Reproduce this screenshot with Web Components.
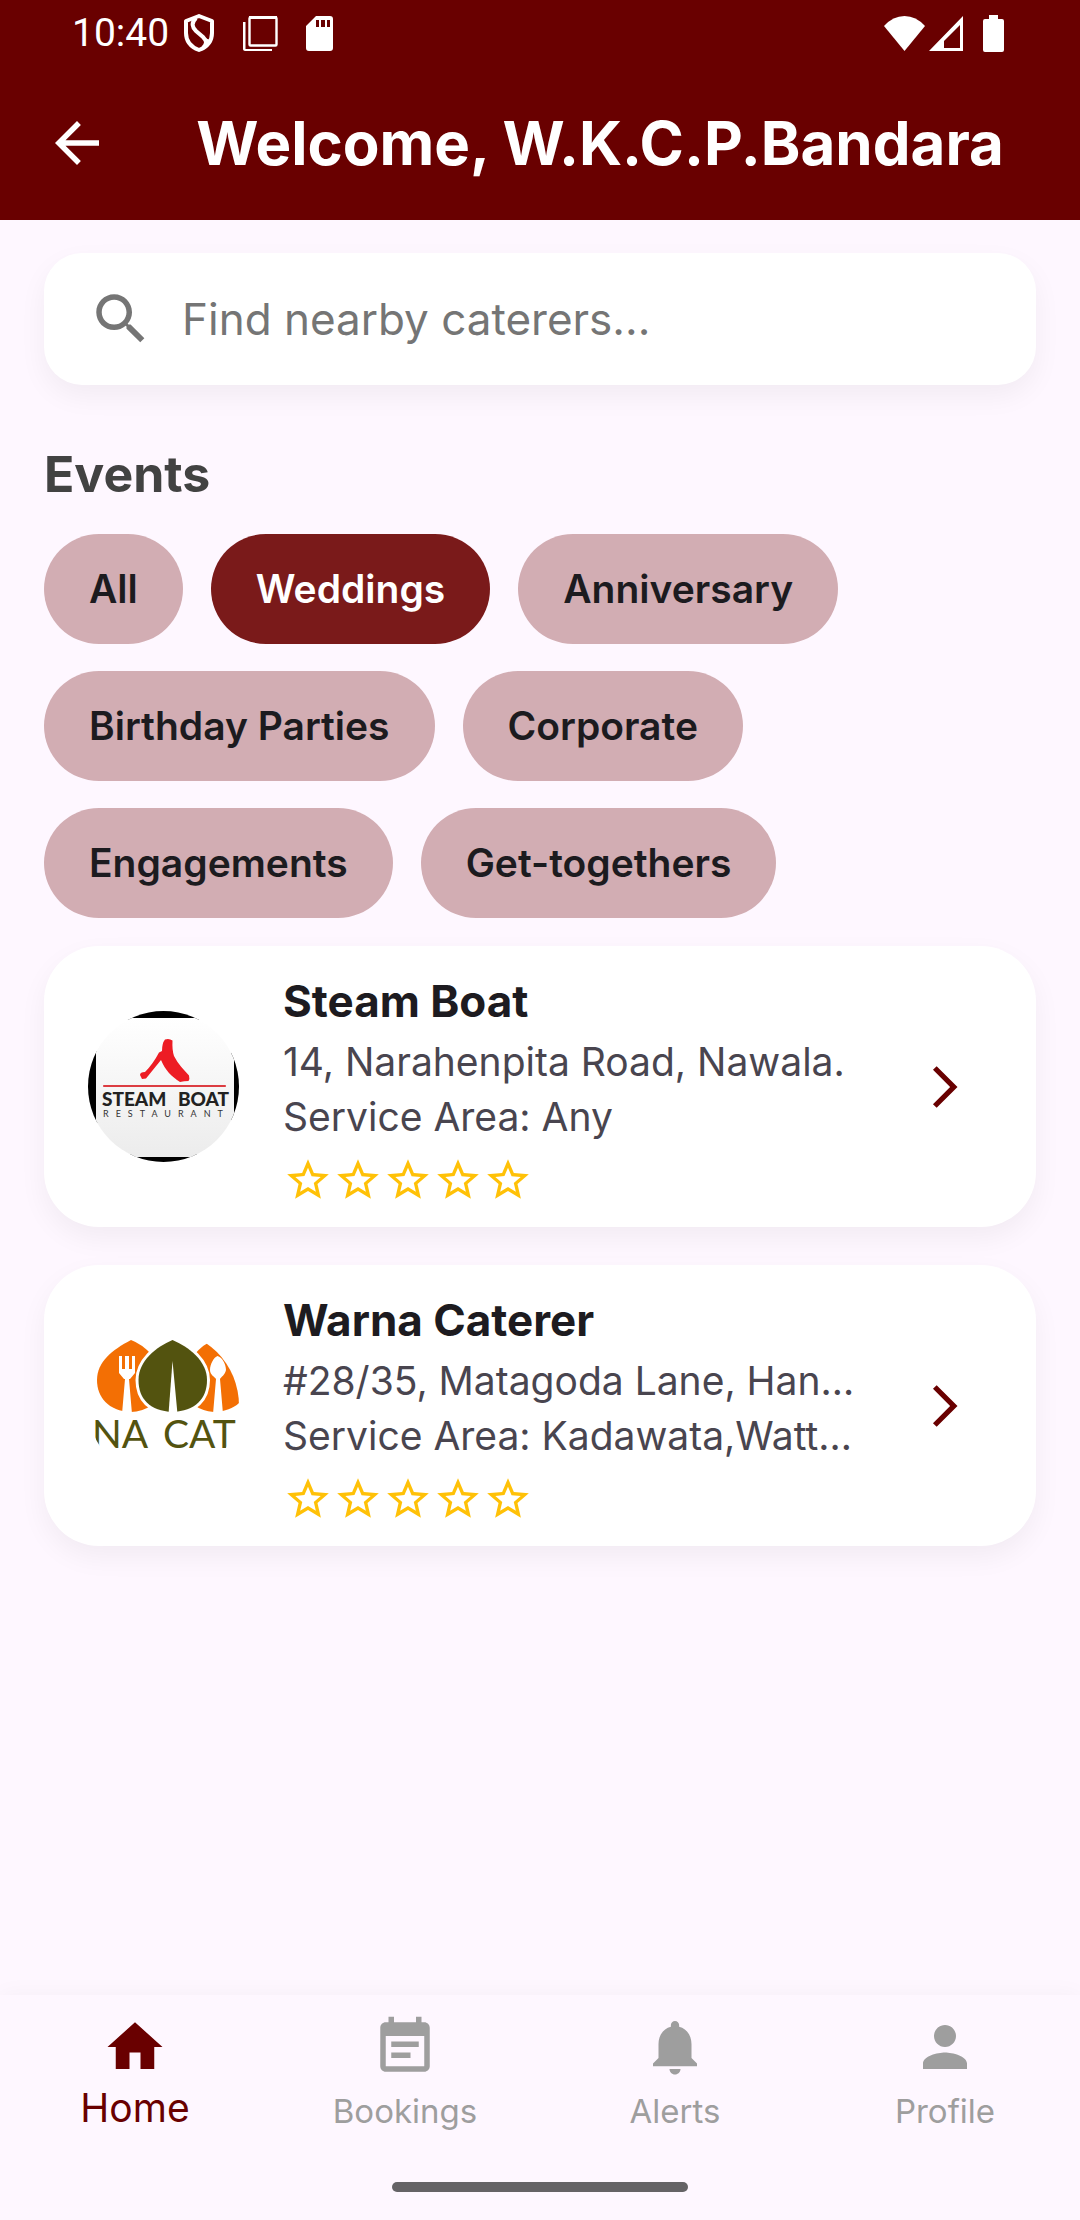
<!DOCTYPE html>
<html lang="en">
<head>
<meta charset="utf-8">
<meta name="viewport" content="width=device-width, initial-scale=1">
<title>Caterers</title>
<style>
  :root {
    --primary: #690000;
    --surface: #fef7ff;
    --card: #ffffff;
    --chip: #d2adb3;
    --chip-on: #7a1a1a;
    --ink: #1d1b20;
    --ink-soft: #49454f;
    --muted: #9e9e9e;
    --star: #ffc107;
    --gutter: 44px;
    --shadow: 0 11px 28px rgba(0, 0, 0, .05);
  }
  body { margin: 0; background: var(--surface); color: var(--ink); font-family: Inter, "Noto Sans", sans-serif; }
</style>
</head>
<body>
<caterer-app></caterer-app>

<script>
const ICONS = {
  back: 'M20 11H7.83l5.59-5.59L12 4l-8 8 8 8 1.41-1.41L7.83 13H20v-2z',
  search: 'M15.5 14h-.79l-.28-.27C15.41 12.59 16 11.11 16 9.5 16 5.91 13.09 3 9.5 3S3 5.91 3 9.5 5.91 16 9.5 16c1.61 0 3.09-.59 4.23-1.57l.27.28v.79l5 4.99L20.49 19l-4.99-5zm-6 0C7.01 14 5 11.99 5 9.5S7.01 5 9.5 5 14 7.01 14 9.5 11.99 14 9.5 14z',
  star: 'M22 9.24l-7.19-.62L12 2 9.19 8.63 2 9.24l5.46 4.73L5.82 21 12 17.27 18.18 21l-1.63-7.03L22 9.24zM12 15.4l-3.76 2.27 1-4.28-3.32-2.88 4.38-.38L12 6.1l1.71 4.04 4.38.38-3.32 2.88 1 4.28L12 15.4z',
  forward: 'M6.23 20.23L8 22l10-10L8 2 6.23 3.77 14.46 12z',
  home: 'M10 20v-6h4v6h5v-8h3L12 3 2 12h3v8z',
  bookings: 'M17 10H7v2h10v-2zm2-7h-1V1h-2v2H8V1H6v2H5c-1.11 0-1.99.9-1.99 2L3 19c0 1.1.89 2 2 2h14c1.1 0 2-.9 2-2V5c0-1.1-.9-2-2-2zm0 16H5V8h14v11zm-5-5H7v2h7v-2z',
  alerts: 'M12 22c1.1 0 2-.9 2-2h-4c0 1.1.89 2 2 2zm6-6v-5c0-3.07-1.64-5.64-4.5-6.32V4c0-.83-.67-1.5-1.5-1.5s-1.5.67-1.5 1.5v.68C7.63 5.36 6 7.92 6 11v5l-2 2v1h16v-1l-2-2z',
  profile: 'M12 12c2.21 0 4-1.79 4-4s-1.79-4-4-4-4 1.79-4 4 1.79 4 4 4zm0 2c-2.67 0-8 1.34-8 4v2h16v-2c0-2.66-5.33-4-8-4z'
};

function define(name, render) {
  customElements.define(name, class extends HTMLElement {
    connectedCallback() {
      if (this.shadowRoot) return;
      this.attachShadow({ mode: 'open' }).innerHTML = render(this);
    }
  });
}

define('ui-icon', el => `
  <style>
    :host { display: block; flex: none; width: var(--icon-size, 66px); height: var(--icon-size, 66px); }
    svg { display: block; width: 100%; height: 100%; fill: currentColor; }
  </style>
  <svg viewBox="0 0 24 24" aria-hidden="true"><path d="${ICONS[el.getAttribute('name')]}"/></svg>`);

define('status-bar', () => `
  <style>
    :host { display: flex; justify-content: space-between; align-items: center; height: 66px;
            padding: 0 76px 0 72px; color: #fff; font: 39px/66px Roboto, sans-serif; }
    div { display: flex; align-items: center; }
    svg { display: block; fill: currentColor; }
    .left { gap: 28px; }
    .clock { display: flex; align-items: center; gap: 14px; }
    .right { gap: 4px; }
    .battery { margin-left: 16px; }
  </style>
  <div class="left">
    <span class="clock"><time>10:40</time>
      <svg width="32" height="38" viewBox="0 0 32 38" aria-hidden="true">
        <path fill="none" stroke="#fff" stroke-width="4" stroke-linejoin="round" d="M16 2 29 7v12c0 8-5 14-13 17C8 33 3 27 3 19V7z"/>
        <path fill="none" stroke="#fff" stroke-width="4" d="M13 4C8 9 9 13 13 17l7 6c4 4 4 7 0 11"/>
        <path d="M22 24c2 4 1 7-2 10l7-8z"/>
      </svg></span>
    <svg width="35" height="35" viewBox="0 0 35 35" aria-hidden="true">
      <rect x="6.500" y="1.500" width="27" height="28" rx="1" fill="none" stroke="#fff" stroke-width="2.400"/>
      <path d="M0 6h2.500v27h26.500v2H2c-1 0-2-1-2-2zM6 0h28v3H6z"/>
    </svg>
    <svg width="27" height="35" viewBox="0 0 27 35" aria-hidden="true">
      <path fill-rule="evenodd" d="M10 0h14q3 0 3 3v29q0 3-3 3H3q-3 0-3-3V10zm0 4v7h3V4zm5 0v7h4V4zm6 0v7h3V4z"/>
    </svg>
  </div>
  <div class="right">
    <svg width="41" height="35" viewBox="0 0 41 35" aria-hidden="true"><path d="M0 10Q9 0 20.500 0T41 10L20.500 35z"/></svg>
    <svg width="34" height="35" viewBox="0 0 34 35" aria-hidden="true"><path fill-rule="evenodd" d="M34 0v35H0zM31 9 15 25v7h16z"/></svg>
    <svg class="battery" width="21" height="37" viewBox="0 0 21 37" aria-hidden="true"><path d="M6 0h9v4h4q2 0 2 2v29q0 2-2 2H2q-2 0-2-2V6q0-2 2-2h4z"/></svg>
  </div>`);

define('app-header', () => `
  <style>
    :host { display: block; background: var(--primary); color: #fff; }
    header { display: flex; align-items: center; gap: 54px; height: 154px; padding: 0 44px; }
    button { display: block; padding: 0; border: 0; background: none; color: inherit; }
    h1 { flex: 1; margin: 0; text-align: center; font-size: 60px; line-height: 74px; font-weight: 700; white-space: nowrap; }
  </style>
  <status-bar></status-bar>
  <header>
    <button type="button" aria-label="Back"><ui-icon name="back"></ui-icon></button>
    <h1><slot></slot></h1>
  </header>`);

define('search-field', el => `
  <style>
    :host { display: block; }
    label { display: flex; align-items: center; gap: 28px; height: 132px; padding: 0 44px; box-sizing: border-box;
            border-radius: 38px; background: var(--card); box-shadow: var(--shadow); color: #757575; }
    input { flex: 1; min-width: 0; height: 66px; padding: 0; border: 0; outline: 0; background: none;
            font: 400 44px/66px Inter, sans-serif; color: var(--ink); }
    input::placeholder { color: #757575; opacity: 1; }
  </style>
  <label><ui-icon name="search"></ui-icon>
    <input type="text" aria-label="Search caterers" placeholder="${el.getAttribute('placeholder')}"></label>`);

define('event-chip', el => `
  <style>
    :host { display: block; }
    button { display: block; height: 110px; padding: 0 45px; border: 0; border-radius: 55px; background: var(--chip);
             color: #1c1b1f; font: 600 39px/110px Inter, sans-serif; white-space: nowrap; }
    button[aria-pressed="true"] { background: var(--chip-on); color: #fff; }
  </style>
  <button type="button" aria-pressed="${el.hasAttribute('selected')}"><slot></slot></button>`);

define('chip-group', () => `
  <style>
    :host { display: block; }
    h2 { margin: 0 0 23px; color: #424242; font-size: 50px; line-height: 74px; font-weight: 700; }
    div { display: flex; flex-wrap: wrap; gap: 27px 28px; }
  </style>
  <h2><slot name="title"></slot></h2>
  <div><slot></slot></div>`);

define('star-rating', () => `
  <style>
    :host { display: flex; height: 50px; --icon-size: 50px; color: var(--star); }
  </style>
  ${'<ui-icon name="star"></ui-icon>'.repeat(5)}`);

define('caterer-card', () => `
  <style>
    :host { display: block; }
    a { display: flex; align-items: center; padding: 22px 66px 22px 44px; border-radius: 55px; background: var(--card);
        box-shadow: var(--shadow); color: inherit; text-decoration: none; }
    .logo { flex: none; width: 151px; height: 151px; border-radius: 50%; overflow: hidden; margin-right: 44px; }
    .info { flex: 1; min-width: 0; }
    h3 { margin: 0; font-size: 44px; line-height: 66px; font-weight: 700; }
    p { margin: 0; color: var(--ink-soft); font-size: 39px; line-height: 55px; white-space: nowrap; overflow: hidden; text-overflow: ellipsis; }
    star-rating { margin-top: 11px; }
    .go { --icon-size: 50px; color: var(--primary); }
  </style>
  <a href="#caterer">
    <div class="logo"><slot name="logo"></slot></div>
    <div class="info">
      <h3><slot name="name"></slot></h3>
      <p><slot name="address"></slot></p>
      <p><slot name="area"></slot></p>
      <star-rating role="img" aria-label="0 of 5 stars"></star-rating>
    </div>
    <ui-icon class="go" name="forward"></ui-icon>
  </a>`);

define('steam-boat-logo', () => `
  <style>:host, svg { display: block; }</style>
  <svg width="151" height="151" viewBox="0 0 151 151" role="img" aria-label="Steam Boat Restaurant">
    <defs><linearGradient id="g" x2="0" y2="1"><stop stop-color="#fff"/><stop offset="1" stop-color="#ececec"/></linearGradient></defs>
    <path d="M36 0h79v9H36zM0 40h10v72H0zM143 40h8v72h-8zM36 143h79v8H36z"/>
    <path fill="url(#g)" d="M8 7h138v139H8z"/>
    <path fill="#fafafa" d="M8 7h36Q18 18 8 43zM146 7h-37q27 11 37 36z"/>
    <path fill="#eee" d="M8 109v37h42Q20 137 8 109zM146 109v37h-45q33-9 45-37z"/>
    <path fill="#ed1c24" d="M77 28.500Q81 27 84.500 29.500 84 39 86 45C90 53 96 59 101 64.500Q102 68 100.500 70 96 70 92 71C84 66 77 59 73 49L58 67.500 54 68 52 64Q52 61 57 61 65 53 71 41.500L74 40Q74 32 77 28.500z"/>
    <path stroke="#dc3c41" stroke-width="2.200" stroke-linecap="round" d="M16 75h121"/>
    <g font-family="Lato, sans-serif" font-weight="900" font-size="19" fill="#222"><text x="14" y="95">STEAM</text><text x="90" y="95">BOAT</text></g>
    <text x="15" y="106" font-family="Lato, sans-serif" font-size="9" letter-spacing="7" fill="#333">RESTAURANT</text>
  </svg>`);

define('warna-logo', () => `
  <style>:host, svg { display: block; }</style>
  <svg width="151" height="151" viewBox="0 0 151 151" role="img" aria-label="Warna Caterer">
    <rect width="151" height="151" fill="#fff"/>
    <g fill="#f36f04">
      <path d="M43 10Q54 14 64 25V75Q54 82 43 82C20 81 9 67 9 50 9 32 24 20 43 10z"/>
      <path d="M126 10C145 20 160 32 160 50S149 81 126 82Q114 81 106 75V25Q115 14 126 10z"/>
    </g>
    <path fill="#53530f" stroke="#fff" stroke-width="6" paint-order="stroke" d="M84.500 10C101 17 119 31 119 50S107 81 84.500 82C62 81 50.500 69 50.500 50S68 17 84.500 10z"/>
    <g fill="#fff">
      <path d="M84.500 31 89.500 84h-9z"/>
      <path d="M31 26h3v13h3V26h4v13h3V26h3v17l-5 6h-1L44 84H34l3-35h-1l-5-6z"/>
      <path d="M129.500 26C134 27 138 34 138 40 137 45 133 47 132 49L135 84H125L128 49C127 47 122 45 122 40 122 34 126 27 129.500 26z"/>
    </g>
    <g font-family="Lato, sans-serif" font-size="39" fill="#53530f"><text x="4" y="118">NA</text><text x="75" y="118">CAT</text></g>
  </svg>`);

define('nav-item', el => `
  <style>
    :host { display: block; flex: 1; }
    a { display: flex; flex-direction: column; align-items: center; padding-top: 19px; color: var(--muted);
        text-decoration: none; font-size: 33px; line-height: 62px; }
    a[aria-current] { color: var(--primary); font-size: 39px; line-height: 55px; }
  </style>
  <a href="#${el.getAttribute('icon')}" ${el.hasAttribute('current') ? 'aria-current="page"' : ''}>
    <ui-icon name="${el.getAttribute('icon')}"></ui-icon>
    <span><slot></slot></span>
  </a>`);

define('bottom-nav', () => `
  <style>
    :host { display: block; background: var(--surface); box-shadow: 0 0 22px rgba(0, 0, 0, .04); }
    nav { display: flex; height: 187px; }
    .handle { width: 296px; height: 10px; margin: 0 auto 28px; border-radius: 5px; background: #656366; }
  </style>
  <nav aria-label="Main"><slot></slot></nav>
  <div class="handle"></div>`);

define('caterer-app', () => `
  <style>
    :host { display: flex; flex-direction: column; min-height: 100vh; }
    main { flex: 1; padding: 33px var(--gutter) 44px; }
    chip-group { margin: 52px 0 28px; }
    .list { display: flex; flex-direction: column; gap: 38px; }
  </style>
  <app-header>Welcome, W.K.C.P.Bandara</app-header>
  <main>
    <search-field placeholder="Find nearby caterers..."></search-field>
    <chip-group>
      <span slot="title">Events</span>
      <event-chip>All</event-chip>
      <event-chip selected>Weddings</event-chip>
      <event-chip>Anniversary</event-chip>
      <event-chip>Birthday Parties</event-chip>
      <event-chip>Corporate</event-chip>
      <event-chip>Engagements</event-chip>
      <event-chip>Get-togethers</event-chip>
    </chip-group>
    <div class="list">
      <caterer-card>
        <steam-boat-logo slot="logo"></steam-boat-logo>
        <span slot="name">Steam Boat</span>
        <span slot="address">14, Narahenpita Road, Nawala.</span>
        <span slot="area">Service Area: Any</span>
      </caterer-card>
      <caterer-card>
        <warna-logo slot="logo"></warna-logo>
        <span slot="name">Warna Caterer</span>
        <span slot="address">#28/35, Matagoda Lane, Han…</span>
        <span slot="area">Service Area: Kadawata,Watt…</span>
      </caterer-card>
    </div>
  </main>
  <bottom-nav>
    <nav-item icon="home" current>Home</nav-item>
    <nav-item icon="bookings">Bookings</nav-item>
    <nav-item icon="alerts">Alerts</nav-item>
    <nav-item icon="profile">Profile</nav-item>
  </bottom-nav>`);
</script>
</body>
</html>
